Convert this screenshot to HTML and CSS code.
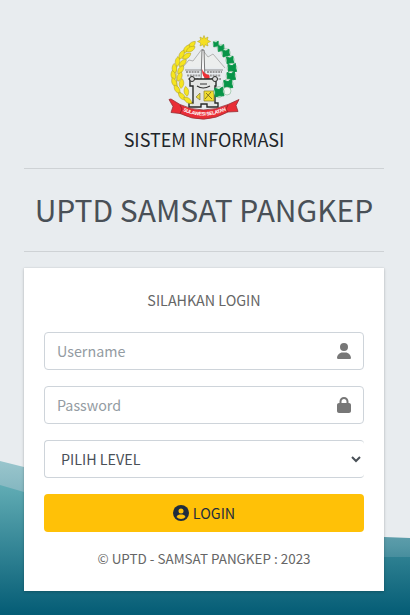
FILE: index.html
```html
<!DOCTYPE html>
<html lang="id">
<head>
<meta charset="utf-8">
<meta name="viewport" content="width=device-width, initial-scale=1">
<title>UPTD Samsat Pangkep</title>
<link rel="stylesheet" href="styles.css">
</head>
<body>
<svg class="waves" viewBox="0 0 410 165" preserveAspectRatio="none" aria-hidden="true">
  <defs>
    <linearGradient id="back" gradientUnits="userSpaceOnUse" x1="0" y1="10" x2="0" y2="165"><stop offset="0" stop-color="#9ac6cd"/><stop offset=".25" stop-color="#7fb3bd"/><stop offset=".55" stop-color="#5598a6"/><stop offset="1" stop-color="#045c75"/></linearGradient>
    <linearGradient id="front" gradientUnits="userSpaceOnUse" x1="0" y1="35" x2="0" y2="165"><stop offset="0" stop-color="#61acb4"/><stop offset="1" stop-color="#045c75"/></linearGradient>
  </defs>
  <path fill="url(#back)" d="M0 11L24 17C150 52 270 84 384 87L410 88V165H0Z"/>
  <path fill="url(#front)" d="M0 35L24 42C150 77 270 106 384 107H410V165H0Z"/>
</svg>
<main class="login">
  <header class="brand">
    <svg class="emblem" viewBox="0 0 72 86" role="img" aria-label="Sulawesi Selatan">
      <defs>
        <g id="grain"><path d="M0 4.500C-3 1-2-3 1-5.500C4-2 3 2 0 4.500Z" fill="#f6e51e" stroke="#aa9c28" stroke-width=".5"/></g>
        <g id="cotton"><circle r="4.200" fill="#edf5ef" stroke="#6ba87e" stroke-width=".5"/><path d="M-3.500-3L0-2L3-4L3 0L4 3L0 3L-3 4L-3 0Z" fill="#079548" stroke="#079548" stroke-width=".8"/></g>
        <path id="motto" d="M14 75.500Q36 86 60 74.500"/>
      </defs>
      <path d="M15 32L21 25L25 26L34 14L40 22L45 19L57 33" fill="#eceeed" stroke="#a4a5a3" stroke-width=".8"/>
      <path d="M18 37H32M39 37H54M19 40.500H32M39 40.500H53M20 44H31M40 44H53" stroke="#999" stroke-width="2.200" stroke-dasharray="2 .8"/>
      <path d="M17 35H55" stroke="#777" stroke-width=".8"/>
      <path d="M34 15L33 47H37L36 15Z" fill="#fafafa" stroke="#444" stroke-width=".7"/>
      <path d="M34 34Q36 39 41 40Q43 44 39 44Q34 43 34 34Z" fill="#ed3136"/>
      <path d="M22 44H48V51H47V68H50V72H39V69H33V72H21V68H25V51H22Z" fill="#e4e6e4" stroke="#292b29" stroke-width="1.400"/>
      <circle cx="24" cy="44" r="2.500" fill="#ddd" stroke="#292b29"/><circle cx="47" cy="44" r="2.500" fill="#ddd" stroke="#292b29"/>
      <path d="M29 51Q35 55 42 51M32 49H39" fill="none" stroke="#333" stroke-width="1.200"/>
      <path d="M36 56H46V66H36Z" fill="#f2de2f" stroke="#8c812c" stroke-width=".7"/>
      <path d="M28 62L32 58V65Z" fill="#eadb39" stroke="#716a30" stroke-width=".6"/><path d="M38 58L44 64M43 57L37 64" stroke="#675c21" stroke-width=".8"/>
      <path d="M24 10Q4 22 9 50Q13 64 25 69" fill="none" stroke="#b3a42b" stroke-width=".7"/>
      <g><use href="#grain" transform="translate(23 10) rotate(40)"/><use href="#grain" transform="translate(18 14) rotate(30)"/><use href="#grain" transform="translate(13 20) rotate(20)"/><use href="#grain" transform="translate(9 27)"/><use href="#grain" transform="translate(6 34) rotate(-10)"/><use href="#grain" transform="translate(5 41) rotate(-18)"/><use href="#grain" transform="translate(6 48) rotate(-28)"/><use href="#grain" transform="translate(9 55) rotate(-38)"/><use href="#grain" transform="translate(14 62) rotate(-50)"/><use href="#grain" transform="translate(20 66) rotate(-60)"/><use href="#grain" transform="translate(22 14) rotate(55)"/><use href="#grain" transform="translate(18 21) rotate(50)"/><use href="#grain" transform="translate(14 28) rotate(40)"/><use href="#grain" transform="translate(12 35) rotate(28)"/><use href="#grain" transform="translate(11 42) rotate(15)"/><use href="#grain" transform="translate(13 49)"/><use href="#grain" transform="translate(18 57) rotate(-15)"/></g>
      <g><use href="#cotton" transform="translate(48 9) scale(.75)"/><use href="#cotton" transform="translate(53 13) scale(.9)"/><use href="#cotton" x="58" y="18"/><use href="#cotton" x="62" y="25"/><use href="#cotton" transform="translate(64 33) scale(1.150)"/><use href="#cotton" transform="translate(63 41) scale(1.150)"/><use href="#cotton" transform="translate(60 49) scale(1.200)"/><circle cx="59" cy="56" r="4" fill="#f0f5f1" stroke="#6ba87e" stroke-width=".5"/><use href="#cotton" transform="translate(51 57) scale(1.250)"/></g>
      <path d="M36 .5L37.200 3.500L40 2L39.300 5L42.500 6.500L39.300 8L40 11L37.200 9.700L36 12.500L34.800 9.700L32 11L32.700 8L29.500 6.500L32.700 5L32 2L34.800 3.500Z" fill="#f5df21" stroke="#b7a92e" stroke-width=".6"/>
      <path d="M1 65L3 64.500L12 70Q35 81 60 70L71 65L68 71L70 77L60 77.500Q36 91 12 79L3 78L5 72Z" transform="translate(0 -.5)" fill="#e92e36" stroke="#973036" stroke-width=".8"/>
      <path d="M12 70L14 74L12 79M60 70L58 74L60 77" fill="none" stroke="#98252c"/>
      <text class="motto"><textPath href="#motto" startOffset="1" textLength="45">SULAWESI SELATAN</textPath></text>
    </svg>
    <div class="system">SISTEM INFORMASI</div>
    <h1 class="office">UPTD SAMSAT PANGKEP</h1>
  </header>
  <section class="card">
    <p class="message">SILAHKAN LOGIN</p>
    <form class="form">
      <label class="field"><input type="text" placeholder="Username" aria-label="Username">
        <svg class="icon" viewBox="0 0 448 512"><path d="M224 256a128 128 0 1 0 0-256 128 128 0 1 0 0 256zm-45.700 48C79.800 304 0 383.800 0 482.300 0 498.700 13.300 512 29.700 512h388.600c16.400 0 29.700-13.300 29.700-29.700C448 383.800 368.200 304 269.700 304h-91.400z"/></svg></label>
      <label class="field"><input type="password" placeholder="Password" aria-label="Password">
        <svg class="icon" viewBox="0 0 448 512"><path d="M144 144v48h160v-48c0-44.200-35.800-80-80-80s-80 35.800-80 80zm-64 48v-48C80 64.500 144.500 0 224 0s144 64.500 144 144v48h16c35.300 0 64 28.700 64 64v192c0 35.300-28.700 64-64 64H64c-35.300 0-64-28.700-64-64V256c0-35.300 28.700-64 64-64h16z"/></svg></label>
      <div class="field select"><select aria-label="Level"><option>PILIH LEVEL</option></select></div>
      <button class="submit" type="button"><svg class="user" viewBox="0 0 16 16"><circle cx="8" cy="8" r="8"/><circle class="hole" cx="8" cy="6" r="2.500"/><path class="hole" d="M3.500 12Q4.200 9.500 6.500 9.500H9.500Q11.800 9.500 12.500 12Q10.700 14 8 14T3.500 12Z"/></svg><span>LOGIN</span></button>
    </form>
    <p class="copyright">© UPTD - SAMSAT PANGKEP : 2023</p>
  </section>
</main>
</body>
</html>
```
FILE: styles.css
```css
* { box-sizing: border-box; }
body {
  margin: 0;
  height: 615px;
  overflow: hidden;
  background: #e8ecef;
  color: #212529;
  font-family: "Source Sans Pro", "Noto Sans CJK JP", "Open Sans", sans-serif;
  font-size: 14.300px;
  font-weight: 400;
}
.waves { position: absolute; left: 0; bottom: 0; width: 100%; height: 165px; }
.login { position: relative; width: 360px; margin-left: 24px; padding-top: 35px; }
.brand { text-align: center; }
.emblem { display: block; width: 72px; height: 86px; margin: 0 auto; }
.motto { fill: #fff; font: bold 5px "Liberation Sans", sans-serif; }
.system { height: 48px; padding-top: 3px; border-bottom: 1px solid #ced2d5; font-size: 18px; line-height: 30px; }
.office { height: 83px; margin: 0 0 16px; border-bottom: 1px solid #ced2d5; color: #495057; font-size: 30px; line-height: 80px; font-weight: 400; }
.card { height: 323px; padding: 20px; background: #fff; color: #666; box-shadow: 0 0 1px rgba(0,0,0,.125), 0 1px 3px rgba(0,0,0,.2); text-align: center; }
.message { margin: 0 0 20px; line-height: 24px; }
.form { display: flex; flex-direction: column; gap: 16px; }
.field { display: flex; align-items: center; height: 38px; border: 1px solid #ced4da; border-radius: 4px; }
.field input { flex: 1; min-width: 0; height: 36px; padding: 0 12px 2px; border: 0; outline: 0; background: transparent; font: inherit; }
.field input::placeholder { color: #939ba2; opacity: 1; }
.icon { width: 14px; height: 16px; margin-right: 12px; fill: #777; }
.select { border-right-width: 0; }
.select select { width: 100%; height: 36px; padding: 0 0 1px 12px; border: 0; background: transparent; color: #495057; font: inherit; }
.submit { display: flex; align-items: center; justify-content: center; gap: 4px; height: 38px; padding-bottom: 2px; border: 0; border-radius: 4px; background: #ffc107; color: #1f2d3d; font: inherit; }
.user { width: 16px; height: 16px; fill: #1f2d3d; }
.user .hole { fill: #ffc107; }
.copyright { margin: 14px 0 0; font-size: 13.450px; line-height: 24px; }
```
